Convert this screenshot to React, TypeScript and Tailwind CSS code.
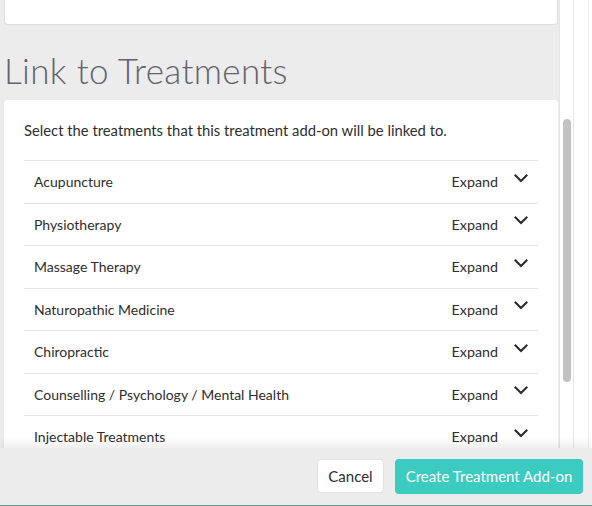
import React from "react";

const rows = [
  "Acupuncture",
  "Physiotherapy",
  "Massage Therapy",
  "Naturopathic Medicine",
  "Chiropractic",
  "Counselling / Psychology / Mental Health",
  "Injectable Treatments",
];

function Chevron() {
  return (
    <svg width="14" height="9" viewBox="0 0 14 9" className="block">
      <path d="M1.5 1.5 L7 7 L12.5 1.5" fill="none" stroke="#2b2b2b" strokeWidth="2.1" strokeLinecap="square" />
    </svg>
  );
}

export default function App() {
  return (
    <div
      className="w-[592px] h-[506px] overflow-hidden bg-[#ececec] flex flex-col"
      style={{ fontFamily: "Lato, 'Open Sans', sans-serif" }}
    >
      <div className="flex h-[448px] min-h-0">
        <div className="w-[559px] overflow-hidden flex flex-col">
          <div className="ml-[4px] mr-[1px] h-[25px] shrink-0 bg-white border border-t-0 border-[#dedede] rounded-b-[4px]" />
          <h2 className="ml-[4px] mt-[23px] text-[35px] leading-[44px] font-light text-[#62626d] tracking-[0.35px]">
            Link to Treatments
          </h2>
          <div className="ml-[4px] mr-[1px] mt-[8px] bg-white rounded-[4px] px-[20px] pt-[20px] shrink-0">
            <p className="text-[14.8px] leading-[20px] text-[#2e2e2e] pb-[20px]">
              Select the treatments that this treatment add-on will be linked to.
            </p>
            <div>
              {rows.map((r) => (
                <div
                  key={r}
                  className="h-[42.5px] border-t border-[#e4e4e4] flex items-center pl-[10px] pr-[10px] text-[14px] text-[#2e2e2e]"
                >
                  <span className="flex-1">{r}</span>
                  <span className="mr-[16px] text-[14.3px]">Expand</span>
                  <span className="-mt-[7px]">
                    <Chevron />
                  </span>
                </div>
              ))}
            </div>
          </div>
        </div>
        <div className="w-[15px] bg-white border-l border-r border-[#e6e6e6] pt-[119px] flex justify-center">
          <div className="w-[8px] h-[263px] rounded-full bg-[#c2c2c2]" />
        </div>
        <div className="flex-1 bg-white flex">
          <div className="ml-[14px] w-px bg-[#ececec]" />
        </div>
      </div>
      <div className="relative flex-1 flex items-center justify-end gap-[11px] pr-[9px] pb-[1px] bg-[#ececec] border-b border-[#5f9a95] shadow-[0_-5px_8px_rgba(0,0,0,0.07)]">
        <button className="h-[34px] w-[67px] bg-white rounded-[4px] border border-[#e2e2e2] text-[15px] leading-[20px] text-[#2e2e2e]">
          Cancel
        </button>
        <button className="h-[35px] w-[188px] bg-[#3ccbc1] rounded-[4px] text-[15px] leading-[20px] text-white">
          Create Treatment Add-on
        </button>
      </div>
    </div>
  );
}
